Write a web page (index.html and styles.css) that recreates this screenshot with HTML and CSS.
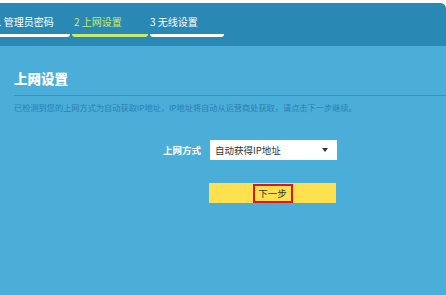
FILE: index.html
```html
<!DOCTYPE html>
<html lang="zh-CN">
<head>
  <meta charset="UTF-8">
  <title>上网设置</title>
  <link rel="stylesheet" href="styles.css">
</head>
<body>
  <div class="page">
    <div class="header">
      <div class="tabs">
        <div class="tab done">1 管理员密码</div>
        <div class="tab active">2 上网设置</div>
        <div class="tab">3 无线设置</div>
      </div>
    </div>
    <div class="content">
      <h2 class="title">上网设置</h2>
      <p class="desc">已检测到您的上网方式为自动获取IP地址，IP地址将自动从运营商处获取，请点击下一步继续。</p>
      <div class="form-row">
        <label class="label">上网方式</label>
        <div class="select">
          <span>自动获得IP地址</span>
          <span class="arrow"></span>
        </div>
      </div>
      <div class="form-row">
        <button class="btn-next"><span class="mark">下一步</span></button>
      </div>
    </div>
  </div>
</body>
</html>
```

FILE: styles.css
```css
body {
  margin: 0;
  padding: 0;
  background-color: #ffffff;
  font-family: "Noto Sans CJK SC", "Noto Sans", sans-serif;
}

.page {
  margin-top: 3px;
  height: 292px;
  background-color: #4aaed8;
  border-top-right-radius: 6px;
  overflow: hidden;
}

.header {
  height: 43px;
  background-color: #2a89b4;
}

.tabs {
  display: flex;
  gap: 2px;
  padding-top: 12px;
  margin-left: -4px;
}

.tab {
  width: 74px;
  height: 19px;
  font-size: 10px;
  line-height: 14px;
  color: #ffffff;
  border-bottom: 3px solid #ffffff;
  border-bottom-right-radius: 3px;
  border-bottom-left-radius: 3px;
}

.tab.active {
  color: #c7ec6c;
  border-bottom-color: #c7ec6c;
  padding-left: 2px;
}

.content {
  padding: 0 0 0 14px;
}

.title {
  margin: 23px 0 0 0;
  font-size: 13.5px;
  line-height: 18px;
  font-weight: 900;
  color: #ffffff;
  padding-bottom: 8px;
  border-bottom: 1px solid #3592c0;
}

.desc {
  margin: 4px 0 0 0;
  font-size: 8.2px;
  line-height: 14px;
  color: #2a80b4;
}

.form-row {
  display: flex;
  align-items: center;
  padding-left: 149px;
}

.label {
  width: 47px;
  font-size: 9.5px;
  font-weight: bold;
  color: #ffffff;
  margin-top: 26px;
}

.select {
  box-sizing: border-box;
  margin-top: 26px;
  width: 127px;
  height: 20px;
  background-color: #ffffff;
  display: flex;
  align-items: center;
  justify-content: space-between;
  padding: 0 9px 0 5px;
  font-size: 9.5px;
  color: #333333;
}

.arrow {
  width: 0;
  height: 0;
  border-left: 3px solid transparent;
  border-right: 3px solid transparent;
  border-top: 4px solid #333333;
}

.btn-next {
  margin: 23px 0 0 46px;
  width: 127px;
  height: 20px;
  border: none;
  padding: 0;
  background-color: #ffe04e;
  display: flex;
  justify-content: center;
  align-items: center;
  font-family: inherit;
}

.mark {
  box-sizing: border-box;
  width: 40px;
  height: 19px;
  border: 2px solid #e0141a;
  font-size: 9.5px;
  line-height: 15px;
  color: #333333;
}
```
